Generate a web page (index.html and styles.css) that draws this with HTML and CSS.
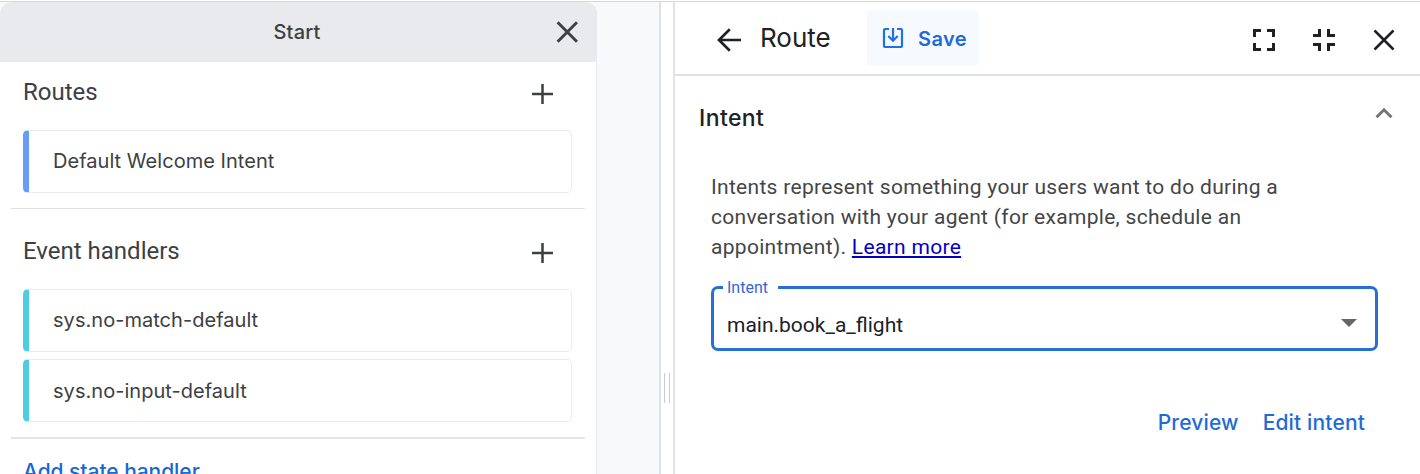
FILE: index.html
```html
<!DOCTYPE html>
<html lang="en">
<head>
<meta charset="utf-8">
<title>Start – Route</title>
<link rel="stylesheet" href="styles.css">
</head>
<body>
<div class="app">
  <div class="canvas">
    <section class="page-card">
      <header class="page-header">
        <h1 class="page-title">Start</h1>
        <svg class="page-close" viewBox="0 0 22 22"><path d="M1.6 1.3 21 20.7M21 1.3 1.6 20.7"/></svg>
      </header>
      <div class="group">
        <div class="group-head">
          <h2 class="group-title">Routes</h2>
          <svg class="plus" viewBox="0 0 21 20"><path d="M10.5 0V20M0 10H21"/></svg>
        </div>
        <div class="item item-route">Default Welcome Intent</div>
      </div>
      <div class="group group-events">
        <div class="group-head">
          <h2 class="group-title">Event handlers</h2>
          <svg class="plus" viewBox="0 0 21 20"><path d="M10.5 0V20M0 10H21"/></svg>
        </div>
        <div class="item item-event">sys.no-match-default</div>
        <div class="item item-event item-last">sys.no-input-default</div>
      </div>
      <div class="add-row"><a class="add-link">Add state handler</a></div>
    </section>
  </div>
  <div class="splitter"><span class="grip"></span></div>
  <main class="panel">
    <header class="panel-header">
      <svg class="back" viewBox="0 0 24 24"><path d="M24 12H2M12.8 1.2 2 12 12.8 22.8"/></svg>
      <span class="route-title">Route</span>
      <button class="save">
        <svg class="save-icon" viewBox="0 0 22 22"><path d="M7 2H3Q2 2 2 3V19Q2 20 3 20H19Q20 20 20 19V3Q20 2 19 2H15M11 1V13.5M6.3 9 11 13.7 15.7 9"/></svg>
        <span class="save-text">Save</span>
      </button>
      <div class="actions">
        <svg class="action" viewBox="0 0 22 22"><path d="M1.5 8V1.5H8M14 1.5H20.5V8M20.5 14V20.5H14M8 20.5H1.5V14"/></svg>
        <svg class="action" viewBox="0 0 22 22"><path d="M0 6.5H6.5V0M15.5 0V6.5H22M22 15.5H15.5V22M6.5 22V15.5H0"/></svg>
        <svg class="action action-close" viewBox="0 0 22 22"><path d="M1.5 1.5 20.5 20.5M20.5 1.5 1.5 20.5"/></svg>
      </div>
    </header>
    <div class="section-head">
      <h2 class="section-title">Intent</h2>
      <svg class="chevron" viewBox="0 0 18 12"><path d="M1.5 10.3 9 2.8 16.5 10.3"/></svg>
    </div>
    <p class="description">Intents represent something your users want to do during a<br>conversation with your agent (for example, schedule an<br>appointment). <a class="learn">Learn more</a></p>
    <div class="select">
      <span class="select-label">Intent</span>
      <span class="select-value">main.book_a_flight</span>
      <svg class="caret" viewBox="0 0 16 8"><path d="M0 0H16L8 8Z"/></svg>
    </div>
    <div class="links"><a class="preview">Preview</a><a class="edit">Edit intent</a></div>
  </main>
</div>
</body>
</html>
```
FILE: styles.css
```css
* { box-sizing: border-box; }
body { margin: 0; height: 474px; overflow: hidden; background: #fff; font-family: Roboto, sans-serif; color: #3c4043; }
h1, h2, p { margin: 0; font-weight: 400; }
svg { display: block; flex: none; fill: none; stroke: currentColor; }
.app { display: flex; height: 474px; padding-top: 1px; }
.canvas { width: 659px; height: 473px; flex: none; border-top: 1px solid #d5d7d9; background: #f8f9fb; overflow: hidden; }
.page-card { width: 597px; height: 480px; background: #fff; border-right: 1px solid #e8eaed; border-radius: 12px 12px 0 0; }
.page-header { display: flex; align-items: center; width: 597px; height: 60px; padding-right: 19px; background: #e8eaed; border-radius: 12px 12px 0 0; }
.page-title { flex: 1; padding-left: 38px; text-align: center; font: 500 20px/24px Inter, sans-serif; letter-spacing: .2px; }
.page-close { width: 22px; height: 22px; stroke-width: 2.9; }
.group { height: 147px; margin: 0 11px; padding: 13px 12px 0; border-bottom: 1px solid #dfe1e3; }
.group-events { height: 230px; border-bottom: 2px solid #e4e5e7; padding-top: 25px; }
.group-head { display: flex; justify-content: space-between; align-items: center; height: 38px; margin-bottom: 17px; padding-right: 20px; }
.group-title { font-size: 24px; line-height: 34px; padding-bottom: 4px; }
.plus { width: 21px; height: 20px; stroke-width: 2.5; }
.item { display: flex; align-items: center; width: 549px; height: 63px; margin-bottom: 7px; padding: 0 0 2px 24px; border: 1px solid #ebecee; border-left: 6px solid #669df6; border-radius: 5px; font: 400 20px/24px Inter, sans-serif; letter-spacing: .04px; }
.item-event { border-left-color: #4ecde2; }
.item-last { padding-bottom: 0; }
.add-row { padding: 21px 23px 0; color: #1967d2; font: 500 21px/24px Inter, sans-serif; letter-spacing: -.05px; }
.splitter { display: flex; align-items: center; justify-content: center; width: 16px; flex: none; border-top: 1px solid #d5d7d9; border-left: 2px solid #dfe0e2; border-right: 2px solid #e2e3e5; background: #fff; }
.grip { width: 6px; height: 30px; margin-top: 300px; border: solid #c9cbcd; border-width: 0 1px; }
.panel { flex: 1; border-top: 1px solid #d5d7d9; background: #fff; color: #202124; }
.panel-header { display: flex; align-items: center; height: 74px; padding: 0 25px 0 42px; border-bottom: 2px solid #e0e1e3; }
.back { width: 24px; height: 24px; margin-top: 4px; stroke-width: 2.7; }
.route-title { width: 126px; padding-left: 19px; font: 400 26px/32px Inter, sans-serif; }
.save { display: flex; align-items: center; gap: 14px; width: 112px; height: 56px; margin: 0; padding: 0 0 0 15px; border: 0; border-radius: 5px; background: #f6f9fe; color: #1a73e8; }
.save-icon { width: 22px; height: 22px; stroke-width: 2.2; }
.save-text { padding-top: 1px; color: #1f6bd6; font: 600 20px/24px Inter, sans-serif; letter-spacing: .4px; }
.actions { display: flex; gap: 38px; margin: 4px 0 0 auto; }
.action { width: 22px; height: 22px; stroke-width: 3; }
.action-close { stroke-width: 2.5; }
.section-head { display: flex; justify-content: space-between; height: 84px; padding: 27px 27px 0 24px; }
.section-title { font: 500 23px/30px Inter, sans-serif; letter-spacing: .4px; }
.chevron { width: 18px; height: 12px; margin-top: 4px; color: #757575; stroke-width: 3; }
.description { height: 126px; padding: 12px 0 0 36px; color: #434548; font-size: 21px; line-height: 30px; letter-spacing: .3px; white-space: nowrap; }
.learn { color: #0000c8; text-decoration: underline; text-decoration-thickness: 2px; text-underline-offset: 2px; }
.select { position: relative; display: flex; justify-content: space-between; align-items: center; width: 667px; height: 65px; margin-left: 36px; padding: 12px 18px 0 13px; border: 3px solid #256fd5; border-radius: 7px; }
.select-label { position: absolute; left: 9px; top: -10px; width: 55px; padding-left: 4px; background: #fff; color: #3367d6; font-size: 16px; line-height: 18px; }
.select-value { font-size: 21px; line-height: 26px; }
.caret { width: 16px; height: 8px; margin-bottom: 4px; color: #666; stroke: none; fill: currentColor; }
.links { display: flex; justify-content: flex-end; gap: 24px; padding: 60px 55px 0 0; color: #1f6bd6; font: 500 21px/24px Inter, sans-serif; letter-spacing: .15px; }
```
